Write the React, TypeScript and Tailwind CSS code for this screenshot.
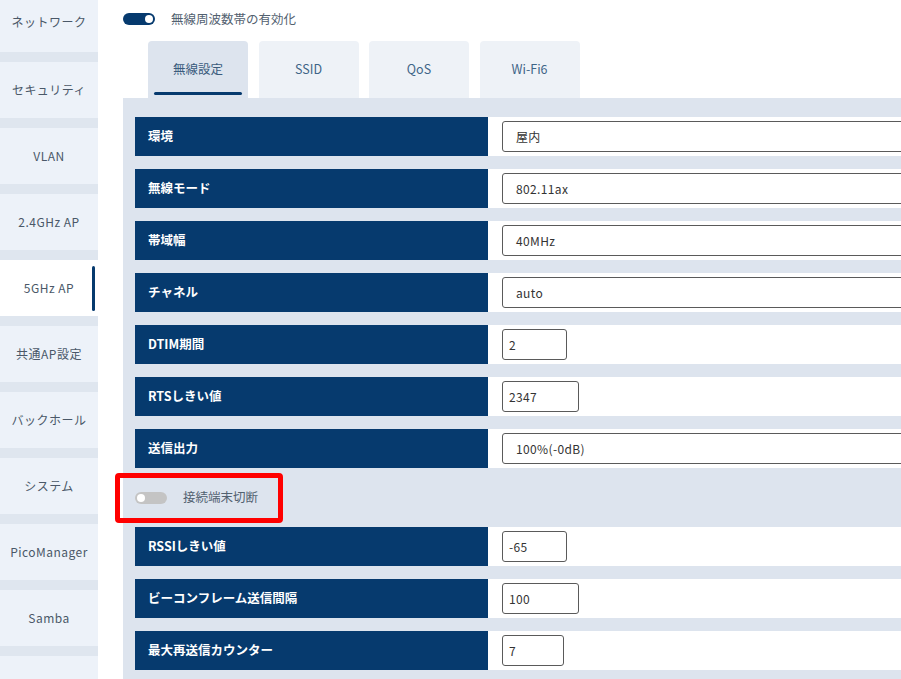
import React from "react";

const FONT = { fontFamily: '"Noto Sans CJK JP", "Noto Sans", sans-serif' };

const menu = [
  "ネットワーク",
  "セキュリティ",
  "VLAN",
  "2.4GHz AP",
  "5GHz AP",
  "共通AP設定",
  "バックホール",
  "システム",
  "PicoManager",
  "Samba",
  "",
];

const tabs = ["無線設定", "SSID", "QoS", "Wi-Fi6"];

type Row = { label: string; value: string; w?: string };

const rowsTop: Row[] = [
  { label: "環境", value: "屋内" },
  { label: "無線モード", value: "802.11ax" },
  { label: "帯域幅", value: "40MHz" },
  { label: "チャネル", value: "auto" },
  { label: "DTIM期間", value: "2", w: "w-[65px]" },
  { label: "RTSしきい値", value: "2347", w: "w-[77px]" },
  { label: "送信出力", value: "100%(-0dB)" },
];

const rowsBottom: Row[] = [
  { label: "RSSIしきい値", value: "-65", w: "w-[65px]" },
  { label: "ビーコンフレーム送信間隔", value: "100", w: "w-[77px]" },
  { label: "最大再送信カウンター", value: "7", w: "w-[62px]" },
];

function Toggle({ on }: { on: boolean }) {
  return (
    <div
      className={`flex h-[12px] w-[32px] shrink-0 items-center rounded-full px-[2px] ${
        on ? "justify-end bg-[#063a6e]" : "justify-start bg-[#c4c4c4]"
      }`}
    >
      <div className="h-[8px] w-[8px] rounded-full bg-white" />
    </div>
  );
}

function SettingRow({ row }: { row: Row }) {
  return (
    <div className="mb-[13px] flex h-[39px]">
      <div className="flex w-[353px] shrink-0 items-center bg-[#063a6e] pl-[13px] text-[12.5px] font-bold text-white">
        {row.label}
      </div>
      <div className="flex flex-1 items-center bg-white pl-[14px]">
        <div
          className={`flex h-[31px] items-center rounded-[3px] border border-[#5a5a5a] bg-white text-[12px] tracking-[0.03em] text-[#333] ${
            row.w ? `${row.w} pl-[6px]` : "w-[420px] pl-[13px]"
          }`}
        >
          {row.value}
        </div>
      </div>
    </div>
  );
}

export default function App() {
  return (
    <div className="flex h-[679px] w-[901px] overflow-hidden bg-white" style={FONT}>
      <div className="flex w-[98px] shrink-0 flex-col gap-[10px] bg-[#dfe6ef]">
        {menu.map((m, i) => (
          <div
            key={i}
            className={`relative flex shrink-0 items-center justify-center text-[12px] text-[#4a5868] ${
              i === 0 ? "h-[52px]" : "h-[56px]"
            } ${m === "5GHz AP" ? "bg-white" : "bg-[#edf2f9]"}`}
          >
            <span className={i === 0 ? "-mt-[8px] tracking-[0.04em]" : "tracking-[0.04em]"}>{m}</span>
            {m === "5GHz AP" && (
              <div className="absolute right-[3px] top-[6px] h-[45px] w-[3px] rounded-full bg-[#063a6e]" />
            )}
          </div>
        ))}
      </div>

      <div className="flex min-w-0 flex-1 flex-col pl-[25px]">
        <div className="flex h-[41px] shrink-0 items-start gap-[16px] pt-[13px]">
          <Toggle on />
          <span className="-mt-[1px] text-[12.5px] leading-[14px] text-[#526170]">無線周波数帯の有効化</span>
        </div>

        <div className="flex shrink-0 gap-[10.5px] pl-[25px]">
          {tabs.map((t, i) => (
            <div
              key={t}
              className={`relative flex h-[57px] w-[100px] items-center justify-center rounded-t-[4px] text-[12.5px] ${
                i === 0 ? "bg-[#dde4ee] text-[#3a5b7c]" : "bg-[#eef2f7] text-[#3f6587]"
              }`}
            >
              {t}
              {i === 0 && (
                <div className="absolute bottom-[3px] left-[6px] right-[6px] h-[3px] rounded-full bg-[#063a6e]" />
              )}
            </div>
          ))}
        </div>

        <div className="flex-1 bg-[#dde4ee] pl-[12px] pt-[19px]">
          {rowsTop.map((r) => (
            <SettingRow key={r.label} row={r} />
          ))}

          <div className="relative mb-[13px] flex h-[33px] items-center gap-[16px]">
            <Toggle on={false} />
            <span className="text-[12.5px] text-[#526170]">接続端末切断</span>
            <div className="absolute left-[-20px] top-[-8px] h-[50px] w-[168px] rounded-[4px] border-[5px] border-[#ff0000]" />
          </div>

          {rowsBottom.map((r) => (
            <SettingRow key={r.label} row={r} />
          ))}
        </div>
      </div>
    </div>
  );
}
